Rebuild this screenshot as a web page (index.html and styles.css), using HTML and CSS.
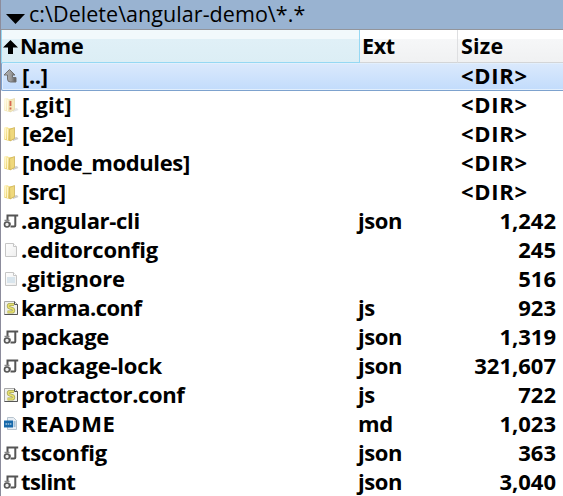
FILE: index.html
```
<!DOCTYPE html>
<html lang="en">
<head>
<meta charset="utf-8">
<title>angular-demo</title>
<link rel="stylesheet" href="styles.css">
</head>
<body>
<svg class="defs" aria-hidden="true">
  <defs>
    <linearGradient id="gold" x1="0" x2="1" y2="1"><stop stop-color="#fff3b8"/><stop offset=".55" stop-color="#edd679"/><stop offset="1" stop-color="#d1ad43"/></linearGradient>
    <linearGradient id="gray" x1="0" x2="1"><stop stop-color="#bbb"/><stop offset=".6" stop-color="#999"/><stop offset="1" stop-color="#555"/></linearGradient>
    <linearGradient id="paper" x2="1" y2="1"><stop stop-color="#fff"/><stop offset="1" stop-color="#eee"/></linearGradient>
    <symbol id="folder" viewBox="0 0 16 16">
      <path d="M9 12l5-1 1.500 2L10 15z" fill="#ccc"/>
      <path d="M1.200 1.500l3-.5 1.500 1H11v11l-4 2-5.800-1.200z" fill="url(#gold)"/>
      <path d="M6.500 3.500l5-2v11L7 15z" fill="#efd87c" stroke="#cdb35a" stroke-width=".8"/>
      <path d="M2.500 2v11M4.500 3v11" stroke="#fff5c8" stroke-width="1"/>
    </symbol>
    <symbol id="json" viewBox="0 0 16 16">
      <path d="M4.500 8V2.500H15.200" fill="none" stroke="#555" stroke-width="2"/>
      <path d="M12.300 3v9.500q0 1-1 1H7.500" fill="none" stroke="#555" stroke-width="2"/>
      <path d="M1.500 7.500h5M7.300 9.500v3" stroke="#888" stroke-width="1.300"/>
      <circle cx="4" cy="11.500" r="2.500" fill="#eee" stroke="#555" stroke-width="1.600"/>
    </symbol>
    <symbol id="page" viewBox="0 0 16 16">
      <path d="M2.500 1.500h8l3 3v10h-11z" fill="url(#paper)" stroke="#c6c6c6"/>
      <path d="M10.500 1.500v3h3" fill="#fff" stroke="#c6c6c6"/>
    </symbol>
    <symbol id="script" viewBox="0 0 16 16">
      <path d="M1.500 1.500h10l3 3v10h-13z" fill="#f1f2ed" stroke="#aaa"/>
      <path d="M11.500 1.500v3h3v10h-13" fill="none" stroke="#555"/>
      <path d="M11 4.500H6.500q-2 1-.5 3l4 1.500q1.500 2-.5 3H4.500" fill="none" stroke="#a5a45a" stroke-width="3.200"/>
      <path d="M11 4.500H6.500q-2 1-.5 3l4 1.500q1.500 2-.5 3H4.500" fill="none" stroke="#e8e16c" stroke-width="1.700"/>
    </symbol>
  </defs>
</svg>
<main class="panel">
  <header class="path"><svg class="caret" viewBox="0 0 19 10"><path d="M0 0h19L9.500 10z"/></svg><span>c:\Delete\angular-demo\*.*</span></header>
  <div class="columns">
    <div class="col sorted"><svg class="sort" viewBox="0 0 15 14"><path d="M7.500 0L15 7.500h-5V14H5V7.500H0z"/></svg><span class="name-head">Name</span></div>
    <div class="col ext-head">Ext</div>
    <div class="col size-head">Size</div>
  </div>
  <div class="files">
    <div class="row selected"><svg class="icon" viewBox="0 0 16 16"><path d="M6.500 1.500L12 7H9.500v2.500h3.500v4.500H7.500q-3 0-3-3V7H1z" fill="url(#gray)" stroke="#707070"/></svg><span class="name dir n-up">[..]</span><span class="size">&lt;DIR&gt;</span></div>
    <div class="row"><svg class="icon" viewBox="0 0 16 16"><g opacity=".5"><use href="#folder"/></g><path d="M7.500 4v5M7.500 10.500v2" stroke="#d86850" stroke-width="1.800"/></svg><span class="name dir n-git">[.git]</span><span class="size">&lt;DIR&gt;</span></div>
    <div class="row"><svg class="icon"><use href="#folder"/></svg><span class="name dir n-e2e">[e2e]</span><span class="size">&lt;DIR&gt;</span></div>
    <div class="row"><svg class="icon"><use href="#folder"/></svg><span class="name dir n-node">[node_modules]</span><span class="size">&lt;DIR&gt;</span></div>
    <div class="row"><svg class="icon"><use href="#folder"/></svg><span class="name dir n-src">[src]</span><span class="size">&lt;DIR&gt;</span></div>
    <div class="row"><svg class="icon"><use href="#json"/></svg><span class="name n-cli">.angular-cli</span><span class="ext">json</span><span class="size num">1,242</span></div>
    <div class="row"><svg class="icon"><use href="#page"/></svg><span class="name n-editor">.editorconfig</span><span class="size num">245</span></div>
    <div class="row"><svg class="icon"><use href="#page"/><path d="M4 6h8v6H4z" fill="#d9e5ed"/></svg><span class="name n-ignore">.gitignore</span><span class="size num">516</span></div>
    <div class="row"><svg class="icon"><use href="#script"/></svg><span class="name n-karma">karma.conf</span><span class="ext js">js</span><span class="size num">923</span></div>
    <div class="row"><svg class="icon"><use href="#json"/></svg><span class="name n-package">package</span><span class="ext">json</span><span class="size num">1,319</span></div>
    <div class="row"><svg class="icon"><use href="#json"/></svg><span class="name n-lock">package-lock</span><span class="ext">json</span><span class="size num">321,607</span></div>
    <div class="row"><svg class="icon"><use href="#script"/></svg><span class="name n-protractor">protractor.conf</span><span class="ext js">js</span><span class="size num">722</span></div>
    <div class="row"><svg class="icon" viewBox="0 0 16 16"><path d="M4.500 1.500h6l3 3v9h-9z" fill="#e8eef4" stroke="#b8c4ce"/><path d="M1 4.500h9v7H1z" fill="#1769aa"/><path d="M2.500 8h6" stroke="#a9c8df" stroke-width="1.500" stroke-dasharray="1.500 .7"/><path d="M10.500 6h2M10.500 8h2M10.500 10h2" stroke="#5990ba"/></svg><span class="name n-readme">README</span><span class="ext">md</span><span class="size num">1,023</span></div>
    <div class="row"><svg class="icon"><use href="#json"/></svg><span class="name n-ts">tsconfig</span><span class="ext">json</span><span class="size num">363</span></div>
    <div class="row"><svg class="icon"><use href="#json"/></svg><span class="name n-lint">tslint</span><span class="ext">json</span><span class="size num">3,040</span></div>
  </div>
</main>
</body>
</html>
```
FILE: styles.css
```
* { box-sizing: border-box; }
body { margin: 0; background: #fff; overflow: hidden; font: 700 22px/27px "Open Sans", "Noto Sans", sans-serif; color: #000; }
.defs { display: block; width: 0; height: 0; }
.panel { width: 563px; height: 496px; overflow: hidden; border-left: 1px solid #8c8c9c; }
.path { display: flex; height: 30px; background: #99b3d1; border-bottom: 1px solid #93959b; padding-left: 5px; font-weight: 400; line-height: 28px; font-size: 21.500px; letter-spacing: .05px; white-space: nowrap; }
.caret { width: 19px; height: 10px; margin: 14px 4px 0 0; }
.columns { display: grid; grid-template-columns: 359px 98px 1fr; height: 32px; padding-bottom: 1px; }
.col { display: flex; line-height: 32px; background: linear-gradient(#fff 9px, #f6f7f8 9px, #f0f1f2); border-right: 1px solid #dedfe1; border-bottom: 1px solid #d3d5d7; font-size: 21.500px; }
.sorted { background: linear-gradient(#f2f9fc 9px, #e0f0f7 9px, #dceef5); border: 1px solid #95d8f3; border-top: 0; }
.sort { width: 15px; height: 14px; margin: 10px 2px 0 1px; }
.name-head { letter-spacing: -.2px; }
.ext-head { padding-left: 2px; letter-spacing: -.3px; }
.size-head { padding-left: 3px; border-right: 0; letter-spacing: .2px; }
.row { display: grid; grid-template-columns: 19px 337px 102px 96px 1fr; height: 29px; padding-left: 1px; line-height: 27px; white-space: nowrap; }
.selected { background: linear-gradient(#dceafc, #c1dbfc); box-shadow: inset 0 0 0 1px #7da2ce, inset 0 0 0 2px #e2effd; border-radius: 2px; margin-right: -4px; }
.icon { width: 16px; height: 16px; margin: 6px 0 0 1px; }
.dir { padding-left: 1px; }
.ext { grid-column: 3; letter-spacing: -.4px; }
.size { grid-column: 4; padding-left: 1px; letter-spacing: .7px; }
.num { text-align: right; letter-spacing: 0; }
.n-up { letter-spacing: -.4px; }
.n-e2e { letter-spacing: -.35px; }
.n-node { letter-spacing: -.36px; }
.n-src { letter-spacing: -.7px; }
.n-cli { letter-spacing: -.33px; }
.n-editor { letter-spacing: -.25px; }
.n-ignore { letter-spacing: -.12px; }
.n-karma { letter-spacing: -.55px; }
.n-package { letter-spacing: -.45px; }
.n-lock { letter-spacing: -.2px; }
.n-protractor { letter-spacing: -.37px; }
.n-readme { letter-spacing: .5px; }
.n-ts { letter-spacing: -.2px; }
.n-lint { letter-spacing: -.6px; }
```
